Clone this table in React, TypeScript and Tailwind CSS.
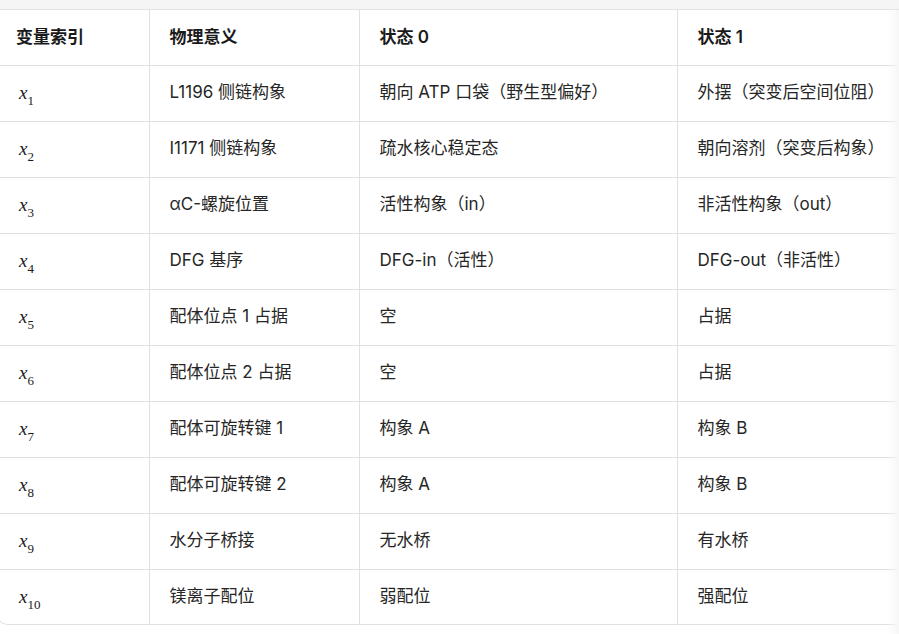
import React from "react";

const rows: [string, string, string, string][] = [
  ["1", "L1196 侧链构象", "朝向 ATP 口袋（野生型偏好）", "外摆（突变后空间位阻）"],
  ["2", "I1171 侧链构象", "疏水核心稳定态", "朝向溶剂（突变后构象）"],
  ["3", "αC-螺旋位置", "活性构象（in）", "非活性构象（out）"],
  ["4", "DFG 基序", "DFG-in（活性）", "DFG-out（非活性）"],
  ["5", "配体位点 1 占据", "空", "占据"],
  ["6", "配体位点 2 占据", "空", "占据"],
  ["7", "配体可旋转键 1", "构象 A", "构象 B"],
  ["8", "配体可旋转键 2", "构象 A", "构象 B"],
  ["9", "水分子桥接", "无水桥", "有水桥"],
  ["10", "镁离子配位", "弱配位", "强配位"],
];

export default function App() {
  return (
    <div className="relative w-[899px] h-[634px] overflow-hidden bg-white" style={{ fontFamily: 'Inter, "Noto Sans CJK SC", sans-serif' }}>
      <div className="h-[10px] bg-[#f5f5f5] border-b border-[#e3e3e3]" />
      <div className="-ml-[4px] w-[960px] rounded-b-xl border-x border-b border-[#e0e0e0] overflow-hidden">
        <table className="w-full border-collapse table-fixed text-[17px] text-[#262626]">
          <colgroup>
            <col className="w-[152px]" />
            <col className="w-[210px]" />
            <col className="w-[318px]" />
            <col />
          </colgroup>
          <thead>
            <tr className="h-[55px] border-b border-[#e0e0e0]">
              <th className="pl-[19px] text-left font-semibold text-[#1a1a1a]">变量索引</th>
              <th className="pl-5 text-left font-semibold text-[#1a1a1a] border-l border-[#e0e0e0]">物理意义</th>
              <th className="pl-5 text-left font-semibold text-[#1a1a1a] border-l border-[#e0e0e0]">状态 0</th>
              <th className="pl-5 text-left font-semibold text-[#1a1a1a] border-l border-[#e0e0e0]">状态 1</th>
            </tr>
          </thead>
          <tbody>
            {rows.map((r, i) => (
              <tr key={r[0]} className={i < rows.length - 1 ? "h-[56px] border-b border-[#e0e0e0]" : "h-[55px]"}>
                <td className="pl-[22px]">
                  <span className="italic text-[19px] text-[#1a1a1a]" style={{ fontFamily: '"Liberation Serif", serif' }}>
                    x
                    <sub className="not-italic text-[13px] align-[-3px]" style={{ fontFamily: '"Liberation Serif", serif' }}>{r[0]}</sub>
                  </span>
                </td>
                <td className="pl-5 border-l border-[#e0e0e0]">{r[1]}</td>
                <td className="pl-5 border-l border-[#e0e0e0]">{r[2]}</td>
                <td className="pl-5 border-l border-[#e0e0e0] whitespace-nowrap">{r[3]}</td>
              </tr>
            ))}
          </tbody>
        </table>
      </div>
      <div className="absolute right-0 top-[10px] bottom-0 w-[12px] bg-gradient-to-r from-transparent to-[#f7f7f7] pointer-events-none" />
    </div>
  );
}
